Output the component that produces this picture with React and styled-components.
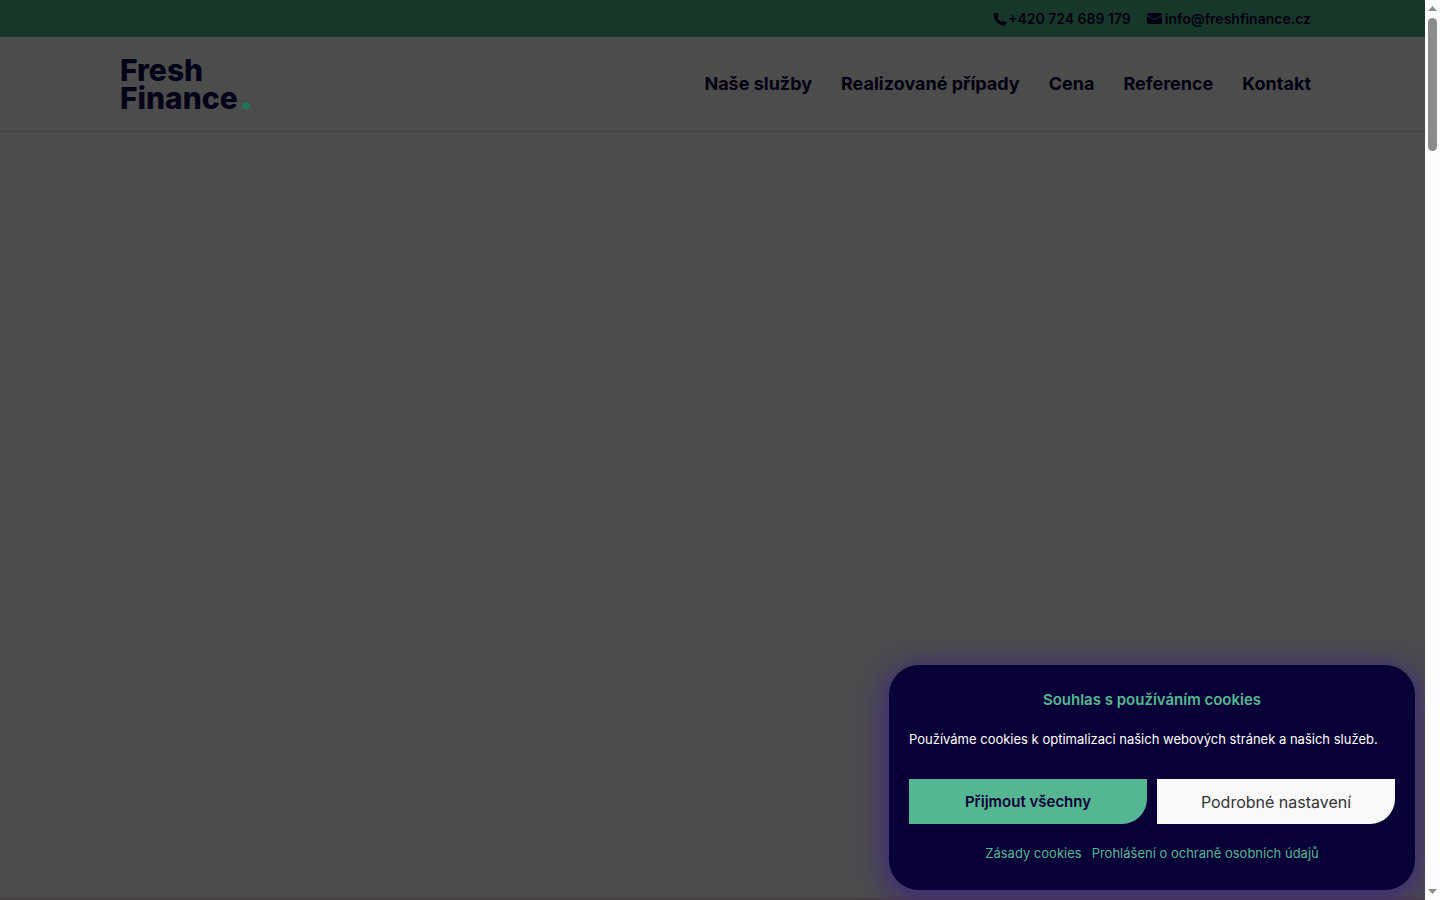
import styled, { createGlobalStyle } from 'styled-components';

const GlobalStyle = createGlobalStyle`
  *, *::before, *::after {
    box-sizing: border-box;
  }

  body {
    margin: 0;
    font-family: Inter, "Open Sans", sans-serif;
    font-size: 14px;
    color: #080036;
    background: #fff;
  }
`;

const Shell = styled.div`
  display: flex;
  height: 100vh;
  overflow: hidden;
`;

const Page = styled.div`
  position: relative;
  display: flex;
  flex: 1;
  flex-direction: column;
  min-width: 0;
  overflow: hidden;
`;

const TopBar = styled.div`
  display: flex;
  align-items: center;
  justify-content: flex-end;
  gap: 16px;
  height: 37px;
  padding: 0 8%;
  background: #52b78f;
`;

const ContactLink = styled.a`
  display: flex;
  align-items: center;
  gap: ${({ $gap }) => $gap};
  font-size: 14px;
  font-weight: 600;
  color: #080036;
  text-decoration: none;
`;

const Header = styled.header`
  display: flex;
  align-items: center;
  justify-content: space-between;
  height: 95px;
  padding: 0 8%;
  border-bottom: 1px solid #e2e2e2;
`;

const Logo = styled.a`
  display: flex;
  align-items: flex-end;
  gap: 4px;
  padding-left: 6px;
  font-size: 30px;
  font-weight: 800;
  line-height: 28px;
  color: #0c0650;
  text-decoration: none;
`;

const LogoLine = styled.span`
  display: block;
`;

const LogoDot = styled.svg`
  position: relative;
  z-index: 1;
  margin-bottom: 3px;
`;

const Nav = styled.nav`
  display: flex;
  gap: 29px;
`;

const NavLink = styled.a`
  font-size: 18px;
  font-weight: 700;
  line-height: 24px;
  color: #080036;
  text-decoration: none;
`;

const Main = styled.main`
  flex: 1;
  border-bottom: 3px solid #f8e0ec;
`;

const Overlay = styled.div`
  position: absolute;
  inset: 0;
  background: rgba(0, 0, 0, 0.7);
`;

const CookieDialog = styled.section`
  position: absolute;
  right: 10px;
  bottom: 10px;
  width: 526px;
  max-width: calc(100% - 20px);
  padding: 23px 20px 24px;
  border-radius: 30px;
  background: #080036;
  box-shadow: 0 6px 30px 6px rgba(56, 30, 140, 0.7);
`;

const CookieTitle = styled.h2`
  margin: 0 0 16px;
  font-size: 15px;
  font-weight: 600;
  line-height: 24px;
  text-align: center;
  color: #54b993;
`;

const CookieText = styled.p`
  margin: 0 0 29px;
  font-size: 13px;
  line-height: 22px;
  color: #fff;
`;

const CookieButtons = styled.div`
  display: flex;
  gap: 10px;
`;

const CookieButton = styled.button`
  flex: 1;
  height: 45px;
  padding: 0 10px;
  border: 0;
  border-radius: 0 0 25px 0;
  font-family: inherit;
  font-size: ${({ $primary }) => ($primary ? '15px' : '16px')};
  font-weight: ${({ $primary }) => ($primary ? 600 : 400)};
  color: ${({ $primary }) => ($primary ? '#080036' : '#333')};
  background: ${({ $primary }) => ($primary ? '#54b693' : '#f9f9f9')};
  cursor: pointer;
`;

const CookieLinks = styled.div`
  display: flex;
  justify-content: center;
  gap: 10px;
  padding: 19px 0 3px;

  a {
    font-size: 13px;
    line-height: 20px;
    color: #54b993;
    text-decoration: none;
  }
`;

const ScrollBar = styled.div`
  display: flex;
  flex-direction: column;
  align-items: center;
  width: 15px;
  padding: 6px 0;
  background: #fcfcfc;
`;

const ScrollThumb = styled.div`
  width: 9px;
  height: 15%;
  margin: 7px 0 auto;
  border-radius: 5px;
  background: #8b8b8b;
`;

const PhoneIcon = () => (
  <svg width="14" height="14" viewBox="0 0 14 14" fill="currentColor" aria-hidden="true">
    <path d="M3.2.7.9 2.1C.2 4.6 1.6 7.7 4 10.2c2.5 2.5 5.5 3.9 8 3.200l1.400-2.200c.2-.4.1-.8-.3-1l-2.400-1.500c-.4-.2-.8-.1-1 .2l-.9 1.100C7 9.400 5.200 7.500 4.300 5.600l1-.9c.3-.3.4-.7.2-1L4.200 1C4 .6 3.600.5 3.200.7z" />
  </svg>
);

const MailIcon = () => (
  <svg width="15" height="12" viewBox="0 0 15 12" fill="currentColor" aria-hidden="true">
    <path d="M1 0h13c.6 0 1 .4 1 1v1L7.500 6 0 2V1c0-.6.4-1 1-1zM0 3l7.500 4L15 3v7c0 .6-.4 1-1 1H1c-.6 0-1-.4-1-1z" />
  </svg>
);

const navItems = ['Naše služby', 'Realizované případy', 'Cena', 'Reference', 'Kontakt'];

const App = () => {
  return (
    <>
      <GlobalStyle />
      <Shell>
        <Page>
          <TopBar>
            <ContactLink href="tel:+420724689179" $gap="1px">
              <PhoneIcon />
              +420 724 689 179
            </ContactLink>
            <ContactLink href="mailto:info@freshfinance.cz" $gap="3px">
              <MailIcon />
              info@freshfinance.cz
            </ContactLink>
          </TopBar>
          <Header>
            <Logo href="#">
              <span>
                <LogoLine>Fresh</LogoLine>
                <LogoLine>Finance</LogoLine>
              </span>
              <LogoDot width="8" height="7" viewBox="0 0 8 7" aria-hidden="true">
                <path d="M0 7V4a4 4 0 0 1 8 0v3z" fill="#237058" />
              </LogoDot>
            </Logo>
            <Nav>
              {navItems.map((item) => (
                <NavLink key={item} href="#">{item}</NavLink>
              ))}
            </Nav>
          </Header>
          <Main />
          <Overlay />
          <CookieDialog role="dialog" aria-labelledby="cookie-title">
            <CookieTitle id="cookie-title">Souhlas s používáním cookies</CookieTitle>
            <CookieText>
              Používáme cookies k optimalizaci našich webových stránek a našich služeb.
            </CookieText>
            <CookieButtons>
              <CookieButton type="button" $primary>Přijmout všechny</CookieButton>
              <CookieButton type="button">Podrobné nastavení</CookieButton>
            </CookieButtons>
            <CookieLinks>
              <a href="#">Zásady cookies</a>
              <a href="#">Prohlášení o ochraně osobních údajů</a>
            </CookieLinks>
          </CookieDialog>
        </Page>
        <ScrollBar aria-hidden="true">
          <svg width="9" height="5" viewBox="0 0 9 5"><path d="M0 5 4.500 0 9 5z" fill="#8b8b8b" /></svg>
          <ScrollThumb />
          <svg width="9" height="5" viewBox="0 0 9 5"><path d="M0 0h9L4.500 5z" fill="#8b8b8b" /></svg>
        </ScrollBar>
      </Shell>
    </>
  );
};

export default App;
